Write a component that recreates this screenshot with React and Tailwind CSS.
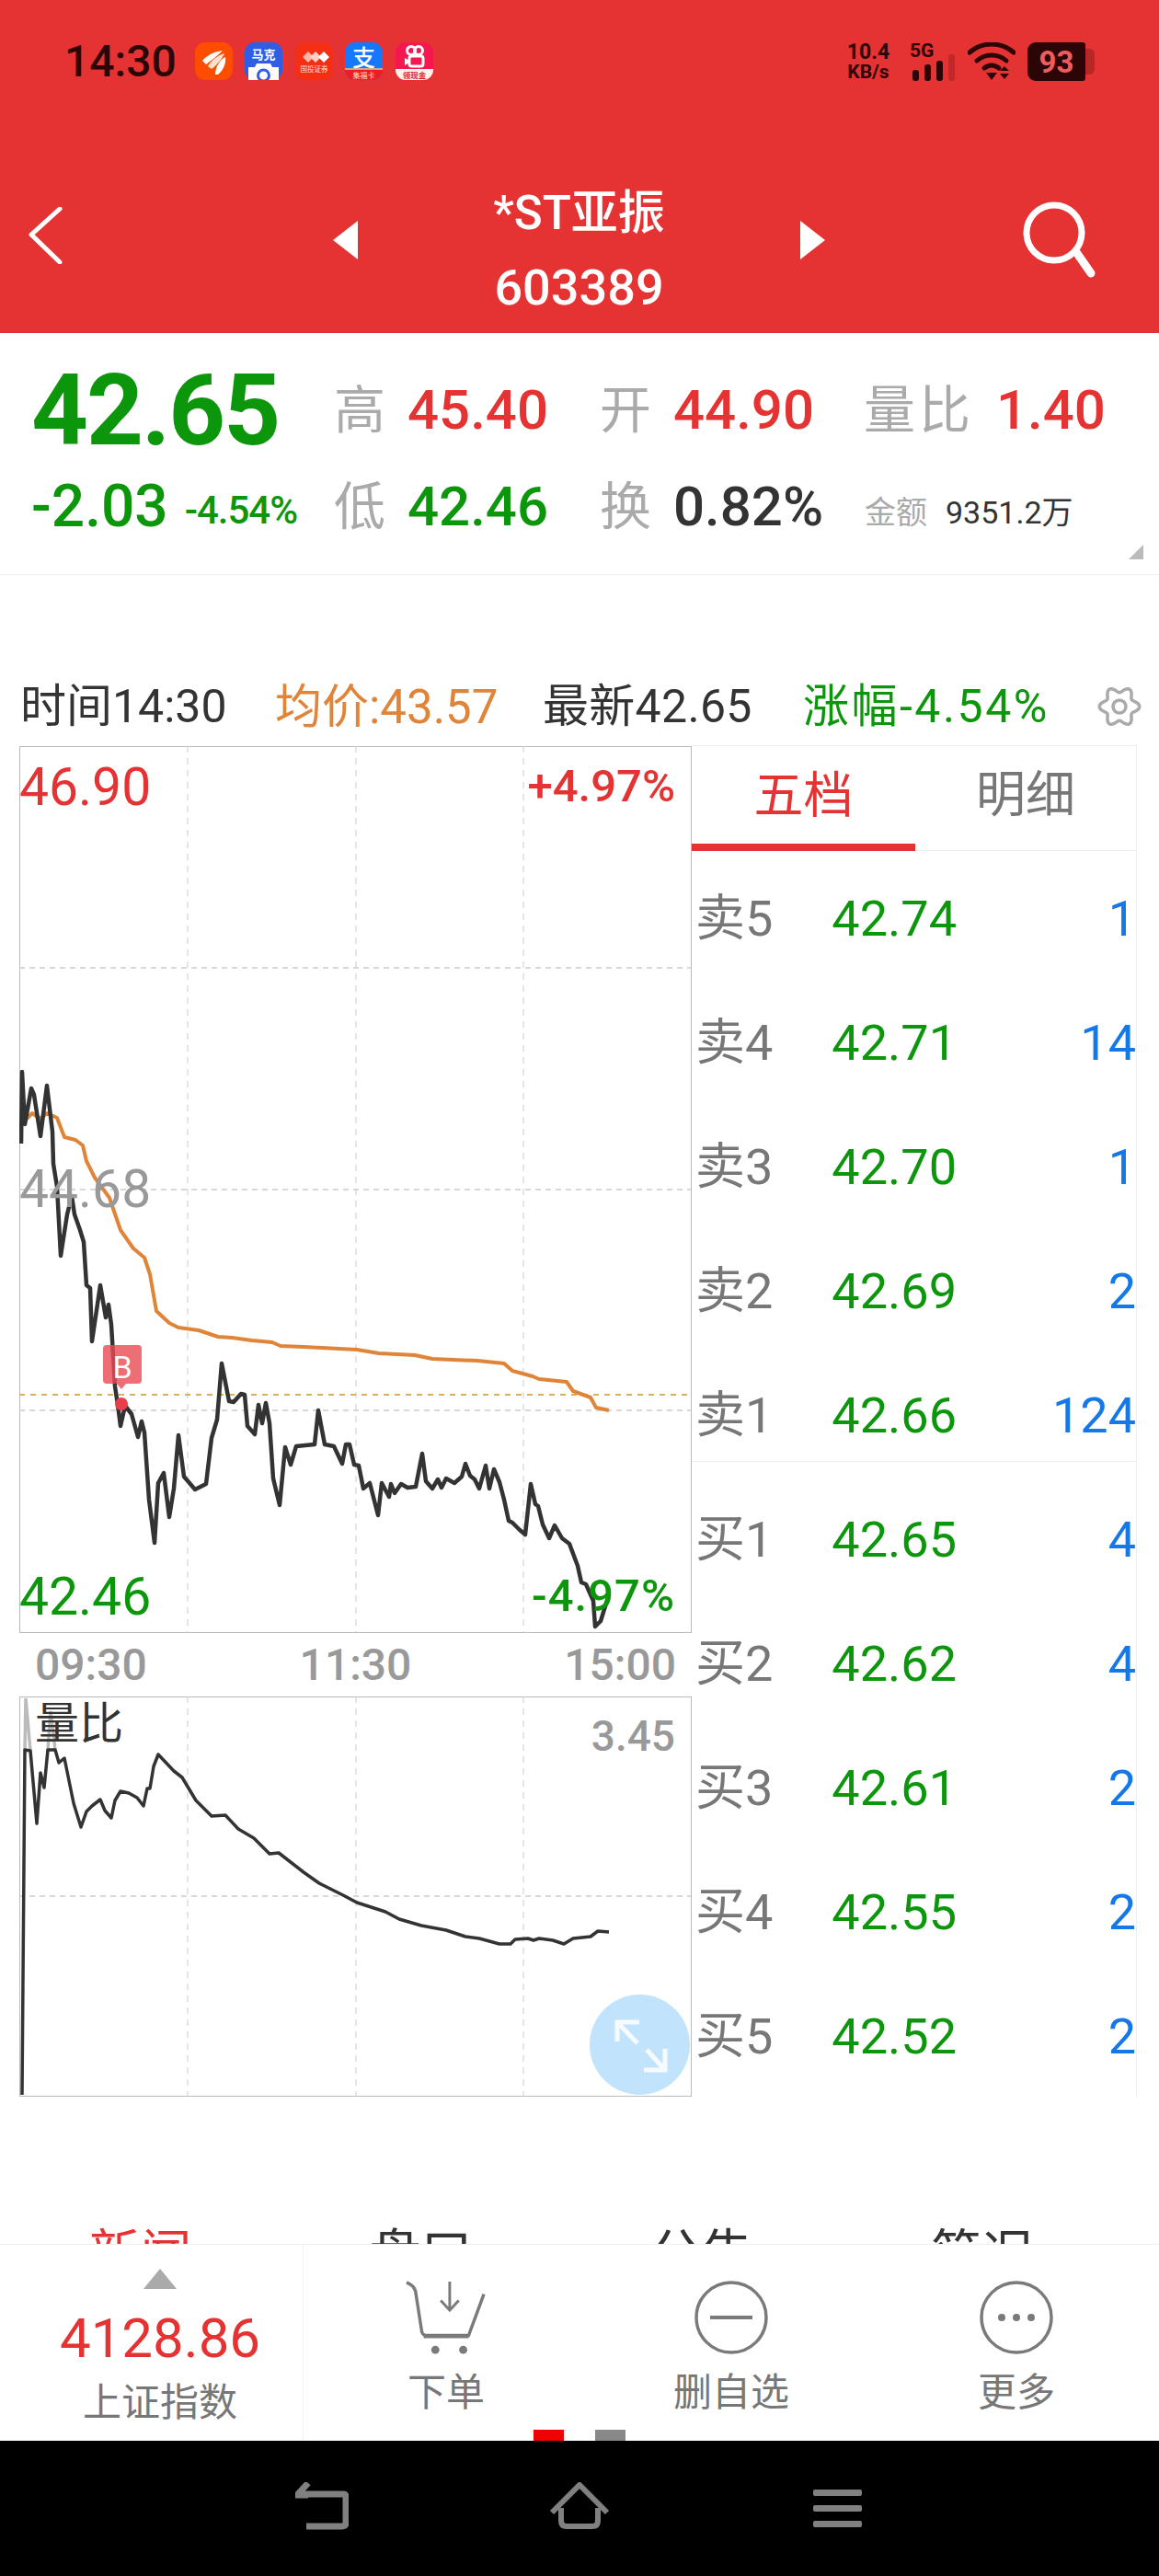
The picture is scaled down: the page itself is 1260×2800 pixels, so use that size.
const pricePoints =
  "23,1243 24,1165 27,1222 34,1183 37,1190 44,1235 51,1180 57,1230 58,1265 62,1290 66,1365 73,1320 78,1300 81,1320 87,1337 91,1350 94,1397 98,1400 100,1458 109,1397 115,1432 118,1418 121,1440 125,1507 128,1527 131,1550 136,1528 143,1537 150,1562 154,1545 157,1557 162,1630 168,1677 172,1612 178,1601 184,1649 189,1618 194,1560 200,1605 212,1619 224,1613 230,1563 236,1543 241,1482 249,1523 254,1524 262,1515 266,1516 269,1550 277,1559 281,1527 285,1547 289,1525 293,1547 297,1607 304,1636 310,1573 316,1592 322,1572 342,1570 346,1533 353,1570 363,1572 372,1591 376,1570 380,1570 385,1592 390,1593 395,1618 402,1612 411,1647 415,1612 423,1627 425,1613 429,1623 436,1613 443,1617 452,1616 459,1580 463,1610 470,1618 476,1608 480,1617 485,1607 494,1612 502,1605 506,1591 511,1604 516,1608 521,1618 528,1593 532,1618 537,1597 543,1611 548,1630 553,1653 557,1655 565,1663 571,1668 577,1613 582,1635 585,1637 590,1657 597,1672 603,1658 611,1672 619,1678 628,1702 632,1720 637,1722 645,1740 647,1768 653,1762 662,1733";

const avgPoints =
  "23,1222 35,1210 44,1216 51,1210 62,1215 70,1236 82,1239 90,1245 94,1262 103,1280 119,1302 131,1337 145,1357 157,1367 163,1385 170,1425 184,1438 194,1443 216,1446 237,1453 252,1454 274,1457 296,1459 305,1463 330,1464 388,1467 412,1471 451,1473 470,1477 519,1479 548,1482 557,1490 579,1496 586,1499 616,1502 623,1512 642,1519 648,1530 662,1533";

const ratioPoints =
  "24,2277 27,1902 33,1903 40,1982 44,1927 48,1943 52,1902 60,1902 64,1916 70,1911 80,1960 88,1986 94,1969 100,1963 109,1956 114,1968 121,1976 125,1957 131,1947 140,1949 149,1954 156,1963 160,1944 163,1944 167,1920 172,1907 189,1925 198,1932 213,1957 230,1974 245,1973 259,1988 276,1998 293,2015 303,2014 330,2035 347,2047 373,2060 388,2068 419,2078 434,2086 458,2093 485,2098 506,2105 521,2107 543,2113 555,2113 560,2108 574,2107 580,2109 586,2107 601,2109 613,2113 623,2107 642,2105 650,2099 662,2100";

const orderRows = [
  { label: "卖5", price: "42.74", volume: "1" },
  { label: "卖4", price: "42.71", volume: "14" },
  { label: "卖3", price: "42.70", volume: "1" },
  { label: "卖2", price: "42.69", volume: "2" },
  { label: "卖1", price: "42.66", volume: "124" },
  { label: "买1", price: "42.65", volume: "4" },
  { label: "买2", price: "42.62", volume: "4" },
  { label: "买3", price: "42.61", volume: "2" },
  { label: "买4", price: "42.55", volume: "2" },
  { label: "买5", price: "42.52", volume: "2" },
];

// six soft lobes, dips at top and bottom
const gearPoints = Array.from({ length: 120 }, (_, i) => {
  const a = (i / 120) * Math.PI * 2;
  const r = 18.5 + 3.2 * Math.cos(6 * a);
  return `${(24 + r * Math.cos(a)).toFixed(1)},${(24 + r * Math.sin(a)).toFixed(1)}`;
}).join(" ");

const AppIcons = () => (
  <div className="flex ml-[20px] gap-[13.5px]">
    <svg width="41" height="41" viewBox="0 0 41 41">
      <rect width="41" height="41" rx="11" fill="#ff4d00" />
      <path d="M8 20 C14 13 22 10 30 9 C24 15 18 19 12 24 Z" fill="#fff" />
      <path d="M14 26 C18 19 25 14 32 12 C29 19 23 25 18 29 Z" fill="#ffe0d0" />
      <path d="M22 35 C22 27 27 19 33 16 C34 24 30 31 25 35 Z" fill="#fff" />
    </svg>
    <svg width="41" height="41" viewBox="0 0 41 41">
      <rect width="41" height="41" rx="11" fill="#2f5de6" />
      <text x="20.5" y="18" textAnchor="middle" fontSize="13" fontWeight="700" fill="#fff">马克</text>
      <path d="M4 27 H11 L13 23 H28 L30 27 H37 V41 H4 Z" fill="#fff" />
      <circle cx="20.5" cy="36" r="6" fill="none" stroke="#2f5de6" strokeWidth="3" />
    </svg>
    <svg width="41" height="41" viewBox="0 0 41 41">
      <rect width="41" height="41" rx="11" fill="#f52f14" />
      <path d="M8 16 L14 10 L20 16 L14 22 Z" fill="#ffb8a8" />
      <path d="M16 16 L22 10 L28 16 L22 22 Z" fill="#ffd0c4" />
      <path d="M25 16 L31 10 L37 16 L31 22 Z" fill="#fff" />
      <text x="20.5" y="32" textAnchor="middle" fontSize="7.5" fill="#ffe0d8">国投证券</text>
    </svg>
    <svg width="41" height="41" viewBox="0 0 41 41">
      <rect width="41" height="41" rx="11" fill="#1677ff" />
      <text x="20.5" y="26" textAnchor="middle" fontSize="25" fontWeight="500" fill="#fff">支</text>
      <path d="M0 29 H41 V30 A11 11 0 0 1 30 41 H11 A11 11 0 0 1 0 30 Z" fill="#ee1c25" />
      <path d="M0 29 H41" stroke="#f7c46c" strokeWidth="1.5" />
      <text x="20.5" y="39" textAnchor="middle" fontSize="8" fill="#ffe4b0">集福卡</text>
    </svg>
    <svg width="41" height="41" viewBox="0 0 41 41">
      <rect width="41" height="41" rx="11" fill="#f5174f" />
      <circle cx="17" cy="9" r="4.5" fill="none" stroke="#fff" strokeWidth="3" />
      <circle cx="25" cy="9" r="4.5" fill="none" stroke="#fff" strokeWidth="3" />
      <rect x="15" y="15" width="15" height="11" rx="2.5" fill="none" stroke="#fff" strokeWidth="3" />
      <path d="M15 20 L10 17 V25 L15 22" fill="#fff" />
      <path d="M0 29 H41 V30 A11 11 0 0 1 30 41 H11 A11 11 0 0 1 0 30 Z" fill="#fff3ea" />
      <text x="20.5" y="39" textAnchor="middle" fontSize="8.5" fontWeight="700" fill="#e0202f">领现金</text>
    </svg>
  </div>
);

const StatusRight = () => (
  <div className="flex items-start ml-auto mr-[70px] text-[#2c0606]">
    <div className="flex flex-col items-center w-[54px] font-bold">
      <span className="text-[23px] leading-[21px]">10.4</span>
      <span className="text-[21px] leading-[22px]">KB/s</span>
    </div>
    <svg width="52" height="42" viewBox="0 0 52 42" className="ml-[18px]">
      <text x="0" y="16" fontSize="21" fontWeight="700" fill="#2c0606">5G</text>
      <rect x="3" y="30" width="7" height="12" rx="3" fill="#2c0606" />
      <rect x="16" y="24" width="7" height="18" rx="3" fill="#2c0606" />
      <rect x="29" y="20" width="7" height="22" rx="3" fill="#2c0606" />
      <rect x="42" y="13" width="7" height="29" rx="3" fill="#2c0606" opacity="0.2" />
    </svg>
    <svg width="52" height="42" viewBox="0 0 52 42" className="ml-[11px]">
      <path d="M2 11 C16 -1 36 -1 50 11" fill="none" stroke="#2c0606" strokeWidth="5" strokeLinecap="round" />
      <path d="M10 20 C19 12 33 12 42 20" fill="none" stroke="#2c0606" strokeWidth="5" strokeLinecap="round" />
      <path d="M18 28 C23 24 29 24 34 28" fill="none" stroke="#2c0606" strokeWidth="5" strokeLinecap="round" />
      <path d="M20 33 H32 L26 41 Z" fill="#2c0606" />
      <path d="M40 26 L45 31 H35 Z M35 34 H45 L40 40 Z" fill="#2c0606" />
    </svg>
    <div className="flex items-center ml-[13px]">
      <div className="flex items-center justify-center w-[63px] h-[42px] rounded-l-[9px] rounded-r-[3px] bg-[#2c0606] text-[#ef5c5c] text-[33px] font-bold leading-none">
        93
      </div>
      <div className="w-[10px] h-[28px] rounded-r-[6px] bg-[#2c0606] opacity-25" />
    </div>
  </div>
);

const Header = () => (
  <header className="flex flex-col h-[362px] shrink-0 bg-[#e53232]">
    <div className="flex items-start h-[160px] pt-[46px]">
      <span className="ml-[70px] text-[48px] leading-[42px] font-medium text-[#2c0606]">14:30</span>
      <AppIcons />
      <StatusRight />
    </div>
    <div className="flex items-center flex-1">
      <svg width="38" height="62" viewBox="0 0 38 62" className="ml-[30px] mb-[10px]">
        <path d="M35 2 L4 30 L35 60" fill="none" stroke="#fff" strokeWidth="5" strokeLinecap="round" strokeLinejoin="round" />
      </svg>
      <svg width="27" height="42" viewBox="0 0 27 42" className="ml-[294px]">
        <path d="M27 0 V42 L0 21 Z" fill="#fff" />
      </svg>
      <div className="flex flex-col items-center w-[481px] mt-[22px] text-white font-medium">
        <span className="text-[51px] leading-[81px]">*ST亚振</span>
        <span className="text-[54px] leading-[81px]">603389</span>
      </div>
      <svg width="27" height="42" viewBox="0 0 27 42">
        <path d="M0 0 V42 L27 21 Z" fill="#fff" />
      </svg>
      <svg width="80" height="84" viewBox="0 0 80 84" className="ml-[215px]">
        <circle cx="34" cy="34" r="30" fill="none" stroke="#fff" strokeWidth="7" />
        <path d="M58 55 L74 78" fill="none" stroke="#fff" strokeWidth="9" strokeLinecap="round" />
      </svg>
    </div>
  </header>
);

const Stat = ({ label, value, color, labelClass }) => (
  <div className="flex items-center -ml-[3px]">
    <span className={`text-[56px] leading-none text-[#aaaaaa] ${labelClass ?? ""}`}>{label}</span>
    <span className={`ml-[24px] text-[60px] leading-none font-medium ${color}`}>{value}</span>
  </div>
);

const Quote = () => (
  <section className="relative flex shrink-0 h-[263px] pt-[31px] border-b border-[#eeeeee]">
    <div className="w-[366px] shrink-0 pl-[34px]">
      <div className="h-[105px] flex items-center text-[108px] leading-none font-bold tracking-[-2px] text-[#0c960c]">
        42.65
      </div>
      <div className="h-[105px] flex items-center gap-[18px] text-[#0c960c] font-medium">
        <span className="text-[64px] leading-none">-2.03</span>
        <span className="mt-[8px] text-[42px] leading-none tracking-[-1px]">-4.54%</span>
      </div>
    </div>
    <div className="grid grid-cols-[289px_285px_1fr] grid-rows-[105px_105px] flex-1">
      <Stat label="高" value="45.40" color="text-[#e53232]" />
      <Stat label="开" value="44.90" color="text-[#e53232]" />
      <Stat label="量比" value="1.40" color="text-[#e53232]" labelClass="ml-[2px] tracking-[4px]" />
      <Stat label="低" value="42.46" color="text-[#0c960c]" />
      <Stat label="换" value="0.82%" color="text-[#333333]" />
      <div className="flex items-center pt-[12px] text-[34px] leading-none">
        <span className="text-[#aaaaaa]">金额</span>
        <span className="ml-[20px] text-[#333333]">9351.2万</span>
      </div>
    </div>
    <svg width="16" height="16" viewBox="0 0 16 16" className="absolute right-[17px] bottom-[16px]">
      <path d="M16 0 V16 H0 Z" fill="#bbbbbb" />
    </svg>
  </section>
);

const InfoRow = () => (
  <div className="flex items-center shrink-0 h-[80px] mt-[103px] pl-[22px] text-[50px] leading-none whitespace-nowrap">
    <span className="w-[277px] text-[#333333]">时间14:30</span>
    <span className="w-[291px] text-[#e08438] text-[51px]">均价:43.57</span>
    <span className="w-[283px] text-[#333333] tracking-[0.3px]">最新42.65</span>
    <span className="text-[#0c960c] text-[50px] tracking-[2.5px]">涨幅-4.54%</span>
    <svg width="48" height="48" viewBox="0 0 48 48" className="ml-[52px]">
      <polygon points={gearPoints} fill="none" stroke="#aaaaaa" strokeWidth="3.5" />
      <circle cx="24" cy="24" r="7" fill="none" stroke="#aaaaaa" strokeWidth="3.5" />
    </svg>
  </div>
);

const GridLines = ({ top, bottom, rows }) => (
  <>
    {[204, 387, 569].map((x) => (
      <line key={x} x1={x} x2={x} y1={top} y2={bottom} stroke="#cccccc" strokeWidth="1" strokeDasharray="7 6" />
    ))}
    {rows.map((y) => (
      <line key={y} x1="21" x2="751" y1={y} y2={y} stroke="#cccccc" strokeWidth="1.5" strokeDasharray="6 5" />
    ))}
  </>
);

const PriceChart = () => (
  <div className="relative w-[731px] h-[964px] border border-[#bbbbbb]">
    <svg width="731" height="964" viewBox="21 811 731 964" className="absolute -left-px -top-px">
      <GridLines top={811} bottom={1774} rows={[1052, 1293, 1533]} />
      <line x1="21" x2="751" y1="1516" y2="1516" stroke="#dcb060" strokeWidth="2" strokeDasharray="6 6" />
      <polyline points={avgPoints} fill="none" stroke="#e08438" strokeWidth="4" strokeLinejoin="round" />
      <polyline points={pricePoints} fill="none" stroke="#333333" strokeWidth="4.5" strokeLinejoin="round" />
      <path
        d="M116 1462 H150 Q154 1462 154 1466 V1500 Q154 1504 150 1504 H137 L132 1510 L127 1504 H116 Q112 1504 112 1500 V1466 Q112 1462 116 1462 Z"
        fill="#ea4a54"
        opacity="0.8"
      />
      <text x="133" y="1498" textAnchor="middle" fontSize="34" fill="#fff">B</text>
      <circle cx="132" cy="1526" r="7" fill="#e8404a" />
    </svg>
    <span className="absolute -left-[1px] top-[11px] text-[57px] leading-[66px] text-[#e53232]">46.90</span>
    <span className="absolute right-[17px] top-[15px] text-[49px] leading-[56px] font-medium text-[#e53232]">+4.97%</span>
    <span className="absolute -left-[1px] top-[448px] text-[57px] leading-[66px] text-[#999999]">44.68</span>
    <span className="absolute -left-[1px] top-[891px] text-[57px] leading-[66px] text-[#0c960c]">42.46</span>
    <span className="absolute right-[17px] top-[895px] text-[49px] leading-[56px] font-medium tracking-[1px] text-[#0c960c]">-4.97%</span>
  </div>
);

const RatioChart = () => (
  <div className="relative w-[731px] h-[435px] border border-[#bbbbbb]">
    <svg width="731" height="435" viewBox="21 1844 731 435" className="absolute -left-px -top-px">
      <GridLines top={1844} bottom={2278} rows={[2061]} />
      <polyline points="27,1902 28,1846 33,1903" fill="none" stroke="#bbbbbb" strokeWidth="3.5" />
      <polyline points="52,1902 55,1860 60,1902" fill="none" stroke="#bbbbbb" strokeWidth="3.5" />
      <polyline points={ratioPoints} fill="none" stroke="#333333" strokeWidth="3.5" strokeLinejoin="round" />
    </svg>
    <span className="absolute left-[16px] top-[1px] text-[48px] leading-[56px] text-[#333333]">量比</span>
    <span className="absolute right-[17px] top-[14px] text-[46px] leading-[56px] font-medium text-[#999999]">3.45</span>
    <div className="absolute right-[1px] bottom-[1px] w-[109px] h-[109px] rounded-full bg-[#c1e3fc]">
      <svg width="109" height="109" viewBox="641 2168 109 109">
        <path d="M695 2198 H671 V2219 M671 2198 L693 2221 M700 2250 H723 V2227 M723 2250 L703 2228" fill="none" stroke="#fff" strokeWidth="5" opacity="0.85" />
      </svg>
    </div>
  </div>
);

const OrderBook = () => (
  <div className="relative w-[484px] h-[1469px] border-t border-r border-[#eeeeee]">
    <div className="flex h-[114px] border-b border-[#eeeeee]">
      <div className="flex items-center justify-center w-[243px] h-[114px] pt-[3px] border-b-[8px] border-[#e53232] text-[54px] leading-none text-[#e53232]">
        五档
      </div>
      <div className="flex items-center justify-center flex-1 pt-[3px] pb-[8px] text-[54px] leading-none text-[#777777]">
        明细
      </div>
    </div>
    <div className="pt-[6px]">
      {orderRows.map((row) => (
        <div key={row.label} className="relative flex items-center h-[135px] pl-[4px] text-[54px] leading-none">
          <span className="text-[54px] text-[#777777]">{row.label}</span>
          <span className="absolute right-[195px] text-[#0c960c]">{row.price}</span>
          <span className="ml-auto text-[#1478e8]">{row.volume}</span>
        </div>
      ))}
    </div>
    <div className="absolute inset-x-0 top-[777px] h-px bg-[#eeeeee]" />
  </div>
);

const ChartArea = () => (
  <div className="flex shrink-0 h-[1469px]">
    <div className="w-[752px] pl-[21px] pt-px">
      <PriceChart />
      <div className="flex items-center justify-between w-[731px] h-[69px] px-[17px] text-[48px] leading-none font-medium text-[#999999]">
        <span>09:30</span>
        <span>11:30</span>
        <span>15:00</span>
      </div>
      <RatioChart />
    </div>
    <OrderBook />
  </div>
);

const NewsTabs = () => (
  <div className="flex-1 relative overflow-hidden">
    <div className="absolute inset-x-0 top-[143px] grid grid-cols-[305px_305px_305px_305px] text-[56px] leading-none text-[#333333]">
      <span className="text-center text-[#e53232]">新闻</span>
      <span className="text-center">盘口</span>
      <span className="text-center">公告</span>
      <span className="text-center">简况</span>
    </div>
  </div>
);

const ActionItem = ({ icon, label }) => (
  <div className="flex flex-col items-center w-[310px]">
    <div className="flex items-center justify-center h-[84px]">{icon}</div>
    <span className="mt-[17px] text-[42px] leading-[46px] text-[#777777]">{label}</span>
  </div>
);

const BottomBar = () => (
  <footer className="relative flex shrink-0 h-[214px] border-t border-[#eeeeee] bg-white">
    <div className="flex flex-col items-center w-[331px] pl-[19px] pt-[26px] border-r border-[#f2f2f2]">
      <svg width="36" height="22" viewBox="0 0 36 22">
        <path d="M18 0 L36 22 H0 Z" fill="#aaaaaa" />
      </svg>
      <span className="mt-[21px] text-[60px] leading-[66px] text-[#e53232]">4128.86</span>
      <span className="mt-[12px] text-[42px] leading-[50px] text-[#777777]">上证指数</span>
    </div>
    <div className="flex flex-1 pt-[37px]">
      <ActionItem
        label="下单"
        icon={
          <svg width="88" height="84" viewBox="0 0 90 84">
            <path d="M1 3 C6 5 10 9 11 13 L18 58 Q19 62 24 62 H70 L87 16" fill="none" stroke="#7a7a7a" strokeWidth="3.5" />
            <path d="M20 63 H70" stroke="#7a7a7a" strokeWidth="4" />
            <path d="M49 2 V33 M39 23 L49 34 L59 23" fill="none" stroke="#7a7a7a" strokeWidth="3" />
            <circle cx="33" cy="78" r="4.5" fill="#7a7a7a" />
            <circle cx="64" cy="78" r="4.5" fill="#7a7a7a" />
          </svg>
        }
      />
      <ActionItem
        label="删自选"
        icon={
          <svg width="80" height="80" viewBox="0 0 80 80">
            <circle cx="40" cy="40" r="38" fill="none" stroke="#7a7a7a" strokeWidth="3.5" />
            <path d="M17 40 H63" stroke="#7a7a7a" strokeWidth="4" />
          </svg>
        }
      />
      <ActionItem
        label="更多"
        icon={
          <svg width="80" height="80" viewBox="0 0 80 80">
            <circle cx="40" cy="40" r="38" fill="none" stroke="#7a7a7a" strokeWidth="3.5" />
            <circle cx="24" cy="40" r="4" fill="#7a7a7a" />
            <circle cx="40" cy="40" r="4" fill="#7a7a7a" />
            <circle cx="56" cy="40" r="4" fill="#7a7a7a" />
          </svg>
        }
      />
    </div>
    <div className="absolute bottom-0 left-[580px] flex gap-[34px]">
      <div className="w-[33px] h-[12px] bg-[#f00000]" />
      <div className="w-[33px] h-[12px] bg-[#888888]" />
    </div>
  </footer>
);

const SystemNav = () => (
  <nav className="flex items-start shrink-0 h-[147px] bg-black pt-[45px]">
    <svg width="58" height="52" viewBox="0 0 58 52" className="ml-[321px]">
      <path d="M14 1 L2 14 L14 14 M5 13 H52 Q55 13 55 16 V44 Q55 48 51 48 H12" fill="none" stroke="#808080" strokeWidth="7" />
    </svg>
    <svg width="68" height="52" viewBox="0 0 68 52" className="ml-[217px]">
      <path d="M4 33 L34 3 L64 33 M14 28 V42 Q14 48 20 48 H48 Q54 48 54 42 V28" fill="none" stroke="#808080" strokeWidth="6" />
    </svg>
    <div className="flex flex-col gap-[10px] ml-[220px] mt-[8px]">
      <div className="w-[53px] h-[7px] rounded-[2px] bg-[#808080]" />
      <div className="w-[53px] h-[7px] rounded-[2px] bg-[#808080]" />
      <div className="w-[53px] h-[7px] rounded-[2px] bg-[#808080]" />
    </div>
  </nav>
);

export default function App() {
  return (
    <div className="flex flex-col w-[1260px] h-[2800px] overflow-hidden bg-white font-[Roboto,'Noto_Sans_CJK_SC',sans-serif]">
      <Header />
      <Quote />
      <InfoRow />
      <div className="h-[2px] shrink-0" />
      <ChartArea />
      <NewsTabs />
      <BottomBar />
      <SystemNav />
    </div>
  );
}
